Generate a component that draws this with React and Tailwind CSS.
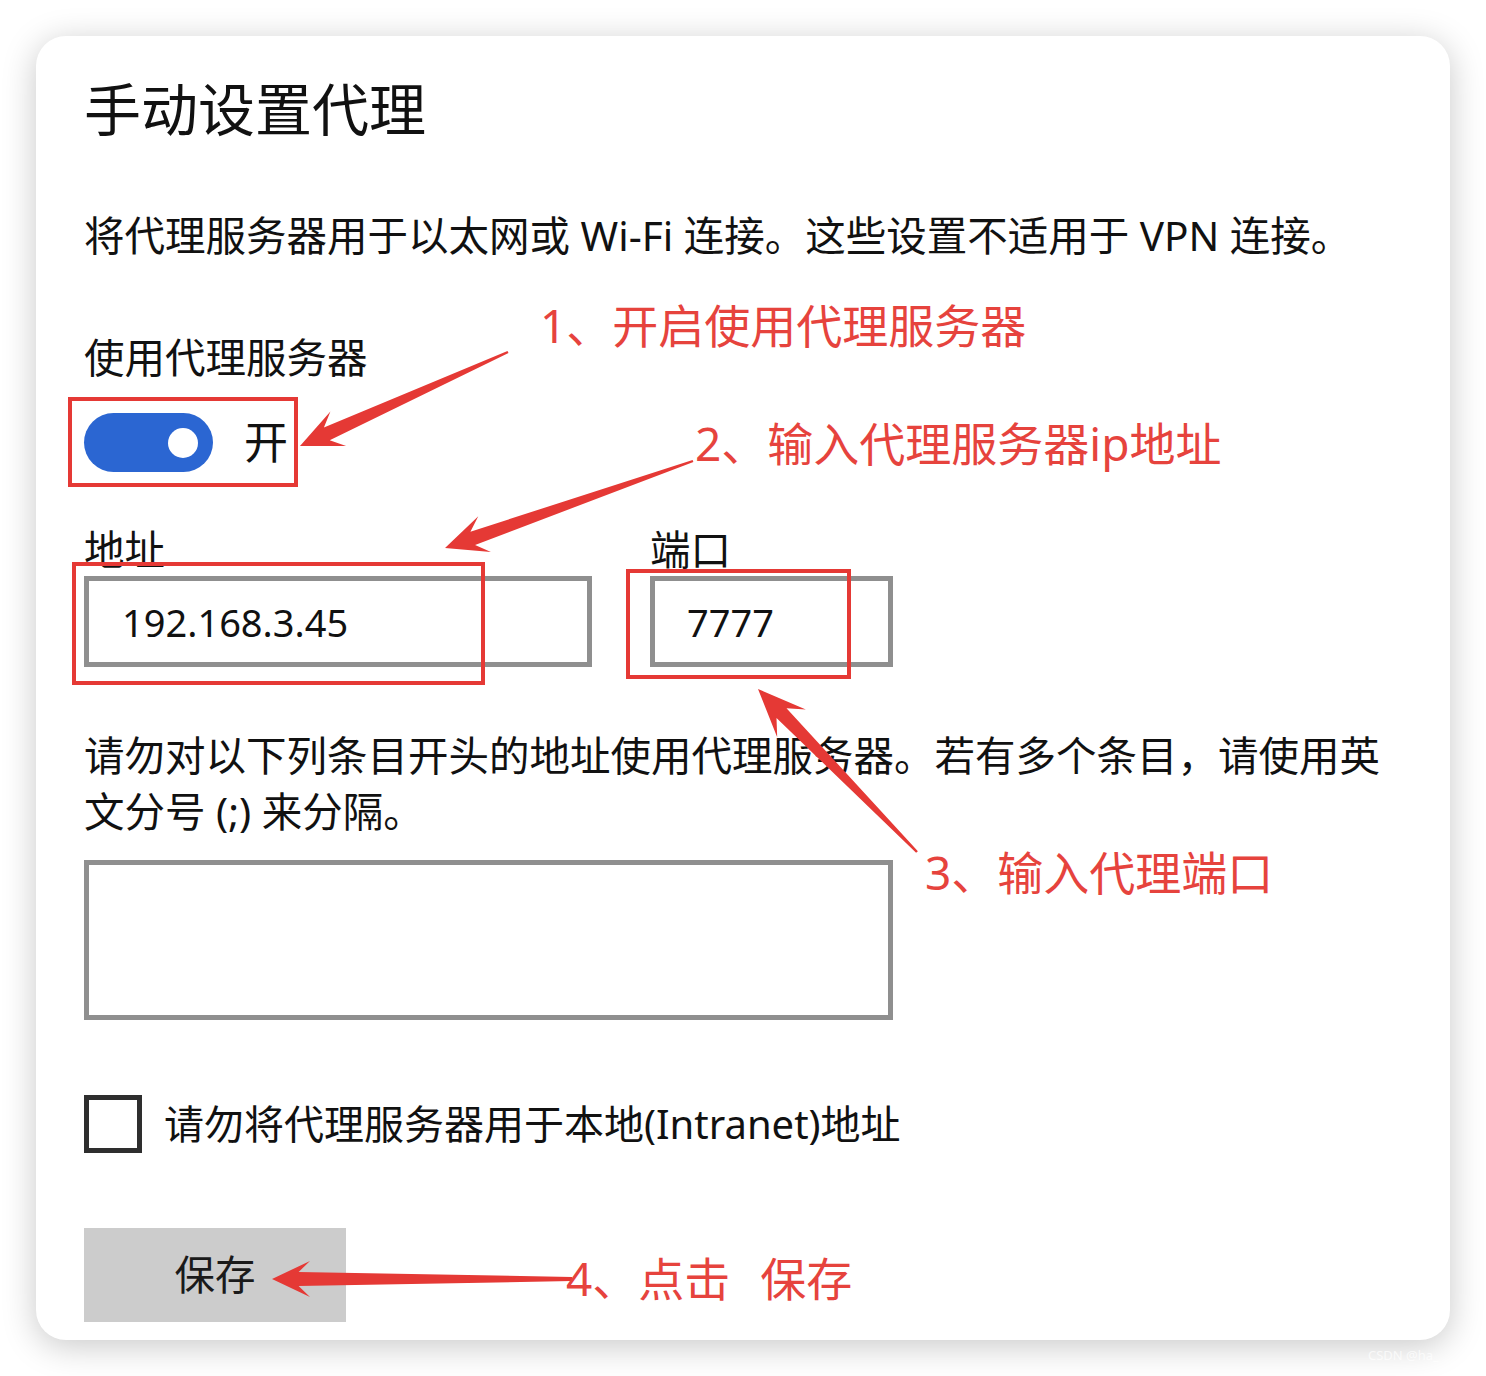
import React from 'react';

const FONT = { fontFamily: '"Noto Sans", "Noto Sans CJK SC", sans-serif' };

// tapered annotation arrow: thin tail, swept-back head
function arrowPoints(x1, y1, x2, y2, head, wing, neck, tail) {
  const len = Math.hypot(x2 - x1, y2 - y1);
  const ux = (x2 - x1) / len;
  const uy = (y2 - y1) / len;
  const nx = -uy;
  const ny = ux;
  const nb = head * 0.7;
  const pts = [
    [x1 + nx * tail, y1 + ny * tail],
    [x2 - ux * nb + nx * neck, y2 - uy * nb + ny * neck],
    [x2 - ux * head + nx * wing, y2 - uy * head + ny * wing],
    [x2, y2],
    [x2 - ux * head - nx * wing, y2 - uy * head - ny * wing],
    [x2 - ux * nb - nx * neck, y2 - uy * nb - ny * neck],
    [x1 - nx * tail, y1 - ny * tail],
  ];
  return pts.map((p) => p.map((v) => v.toFixed(1)).join(',')).join(' ');
}

const ARROWS = [
  [508, 352, 300, 446, 42, 19, 7, 1.2],
  [693, 461, 445, 548, 42, 19, 7, 1.2],
  [917, 852, 758, 689, 48, 20, 7, 1.2],
  [572, 1279, 272, 1279, 38, 18, 7, 2],
];

const RedBox = ({ className }) => (
  <div className={`absolute border-[4px] border-[#e53935] pointer-events-none ${className}`} />
);

export default function App() {
  return (
    <div className="relative w-[1486px] h-[1376px] bg-white overflow-hidden" style={FONT}>
      <div className="absolute left-[36px] top-[36px] w-[1414px] h-[1304px] rounded-[30px] bg-white shadow-[0_6px_34px_rgba(0,0,0,0.22)] pl-[48px] pt-[39px] text-[#111]">
        <h1 className="text-[57px] leading-[68px] font-normal">手动设置代理</h1>

        <p className="mt-[65px] text-[40.5px] leading-[56px]">
          将代理服务器用于以太网或 Wi-Fi 连接。这些设置不适用于 VPN 连接。
        </p>

        <p className="mt-[66px] text-[40.5px] leading-[56px]">使用代理服务器</p>

        {/* toggle */}
        <div className="relative mt-[27px] flex items-center w-max">
          <div className="w-[129px] h-[59px] rounded-full bg-[#2b66d2] flex items-center justify-end pr-[15px]">
            <div className="w-[30px] h-[30px] rounded-full bg-white" />
          </div>
          <span className="ml-[31px] text-[44px] leading-[59px]">开</span>
          <RedBox className="left-[-16px] top-[-16px] w-[230px] h-[90px]" />
        </div>

        {/* address / port */}
        <div className="mt-[52px] flex items-start">
          <div className="flex flex-col">
            <span className="text-[40.5px] leading-[52px]">地址</span>
            <div className="relative w-[508px] h-[91px] border-[5px] border-[#8f8f8f] flex items-center pl-[33px]">
              <span className="text-[38px] leading-none" style={{ fontFamily: '"Noto Sans", sans-serif' }}>192.168.3.45</span>
              <RedBox className="left-[-17px] top-[-19px] w-[413px] h-[123px]" />
            </div>
          </div>
          <div className="ml-[58px] flex flex-col">
            <span className="text-[40.5px] leading-[52px]">端口</span>
            <div className="relative w-[243px] h-[91px] border-[5px] border-[#8f8f8f] flex items-center pl-[32px]">
              <span className="text-[38px] leading-none" style={{ fontFamily: '"Noto Sans", sans-serif' }}>7777</span>
              <RedBox className="left-[-29px] top-[-12px] w-[225px] h-[110px]" />
            </div>
          </div>
        </div>

        <p className="mt-[61px] w-[1310px] text-[40.5px] leading-[56px]">
          请勿对以下列条目开头的地址使用代理服务器。若有多个条目，请使用英文分号 (;) 来分隔。
        </p>

        <div className="mt-[20px] w-[809px] h-[160px] border-[5px] border-[#8f8f8f]" />

        {/* checkbox */}
        <div className="mt-[75px] flex items-center">
          <div className="w-[58px] h-[58px] border-[5px] border-[#2e2e2e]" />
          <span className="ml-[22px] text-[40px] leading-[56px]">请勿将代理服务器用于本地(Intranet)地址</span>
        </div>

        <button className="mt-[75px] w-[262px] h-[94px] bg-[#cccccc] text-[40.5px] leading-none text-[#1a1a1a] flex items-center justify-center">
          保存
        </button>
      </div>

      {/* annotations */}
      <svg className="absolute left-0 top-0 pointer-events-none" width="1486" height="1376" viewBox="0 0 1486 1376">
        {ARROWS.map((a, i) => (
          <polygon key={i} points={arrowPoints(...a)} fill="#e53935" />
        ))}
      </svg>

      <span className="absolute left-[540px] top-[302px] text-[46px] leading-[46px] text-[#e6433d] whitespace-nowrap">1、开启使用代理服务器</span>
      <span className="absolute left-[695px] top-[420px] text-[46px] leading-[46px] text-[#e6433d] whitespace-nowrap">2、输入代理服务器ip地址</span>
      <span className="absolute left-[925px] top-[849px] text-[46px] leading-[46px] text-[#e6433d] whitespace-nowrap">3、输入代理端口</span>
      <span className="absolute left-[566px] top-[1255px] text-[46px] leading-[46px] text-[#e6433d] whitespace-pre">
        4、点击  <span className="ml-[6px]">保存</span>
      </span>

      <span className="absolute left-[1368px] top-[1346px] text-[13px] text-white/70 whitespace-nowrap">CSDN @ha_</span>
    </div>
  );
}
